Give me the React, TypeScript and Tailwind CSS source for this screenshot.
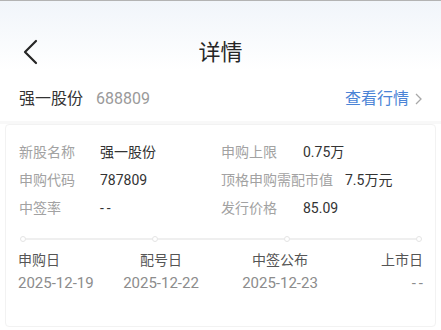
const font = { fontFamily: "Roboto, 'Noto Sans CJK SC', sans-serif" };

const info = [
  { l1: "新股名称", v1: "强一股份", l2: "申购上限", v2: "0.75万" },
  { l1: "申购代码", v1: "787809", l2: "顶格申购需配市值", v2: "7.5万元" },
  { l1: "中签率", v1: "--", l2: "发行价格", v2: "85.09" },
];

function Dot() {
  return <div className="w-[6px] h-[6px] rounded-full border border-[#e4e4e4] bg-white shrink-0" />;
}

export default function App() {
  return (
    <div className="w-[441px] h-[330px] overflow-hidden bg-white" style={font}>
      <div className="h-px bg-[#b3b3b3]" />
      <div className="bg-gradient-to-b from-[#f1f5fa] to-white to-[70px] px-[19px] pt-[35px] pb-[10px]">
        <div className="relative flex items-center h-[32px]">
          <svg width="18" height="26" viewBox="0 0 18 26" className="ml-[3px]">
            <path d="M14 2 L3 13 L14 24" fill="none" stroke="#262626" strokeWidth="2.2" strokeLinecap="round" strokeLinejoin="round" />
          </svg>
          <div className="absolute left-0 right-0 text-center text-[22px] text-[#262626] pointer-events-none">详情</div>
        </div>
        <div className="flex items-center justify-between mt-[19px] h-[24px]">
          <div className="flex items-center gap-[13px]">
            <span className="text-[16px] text-[#333]">强一股份</span>
            <span className="text-[16px] text-[#9a9a9a]">688809</span>
          </div>
          <div className="flex items-center gap-[6px] text-[16px] text-[#4b84d6]">
            <span>查看行情</span>
            <svg width="7" height="12" viewBox="0 0 7 12">
              <path d="M1 1 L6 6 L1 11" fill="none" stroke="#a8a8a8" strokeWidth="1.3" />
            </svg>
          </div>
        </div>
      </div>
      <div className="h-[3px] bg-[#f8f8f8]" />
      <div className="mx-[5px] border border-[#f2f2f2] rounded-[4px] pl-[13px] pr-[12px] pt-[13px] pb-[33px]">
        <div className="flex flex-col">
          {info.map((r) => (
            <div key={r.l1} className="grid grid-cols-[202px_1fr] h-[28px] items-center text-[14px]">
              <div className="flex">
                <span className="w-[81px] text-[#a2a2a2]">{r.l1}</span>
                <span className={r.v1 === "--" ? "text-[#333] tracking-[3px]" : "text-[#333]"}>{r.v1}</span>
              </div>
              <div className="flex gap-[12px]">
                <span className="min-w-[70px] text-[#a2a2a2]">{r.l2}</span>
                <span className="text-[#333]">{r.v2}</span>
              </div>
            </div>
          ))}
        </div>
        <div className="flex items-center mt-[14px] px-[1px]">
          <Dot />
          <div className="flex-1 h-[2px] bg-[#efefef]" />
          <Dot />
          <div className="flex-1 h-[2px] bg-[#efefef]" />
          <Dot />
          <div className="flex-1 h-[2px] bg-[#efefef]" />
          <Dot />
        </div>
        <div className="grid grid-cols-[100px_86px_152px_1fr] mt-[8px] -ml-[1px] leading-[20px]">
          <div className="text-left">
            <div className="text-[14px] text-[#555]">申购日</div>
            <div className="text-[15px] text-[#8c8c8c] mt-[3px]">2025-12-19</div>
          </div>
          <div className="text-center">
            <div className="text-[14px] text-[#555]">配号日</div>
            <div className="text-[15px] text-[#8c8c8c] mt-[3px] whitespace-nowrap">2025-12-22</div>
          </div>
          <div className="text-center">
            <div className="text-[14px] text-[#555]">中签公布</div>
            <div className="text-[15px] text-[#8c8c8c] mt-[3px]">2025-12-23</div>
          </div>
          <div className="text-right">
            <div className="text-[14px] text-[#555]">上市日</div>
            <div className="text-[15px] text-[#8c8c8c] mt-[3px] tracking-[3px] -mr-[3px]">--</div>
          </div>
        </div>
      </div>
    </div>
  );
}
